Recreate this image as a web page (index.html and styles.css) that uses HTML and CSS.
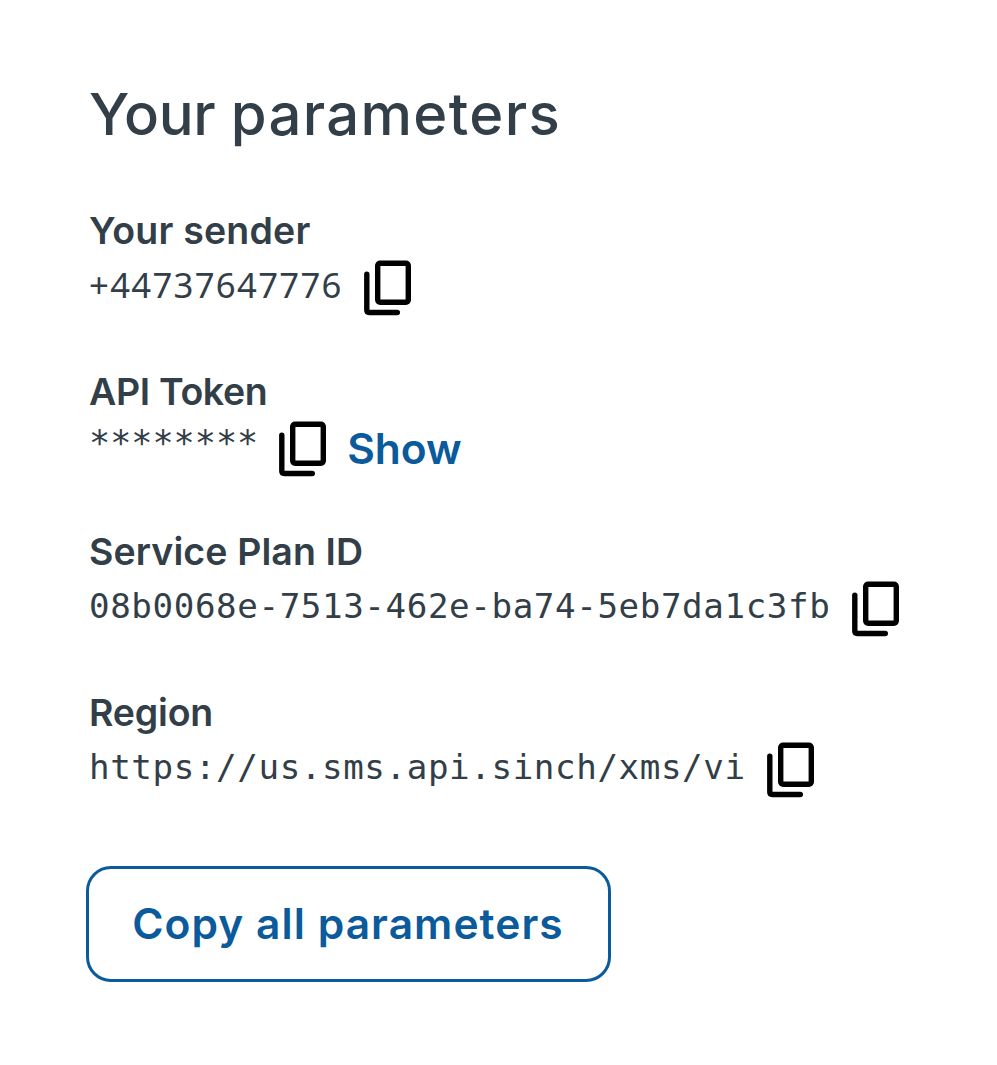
FILE: index.html
```html
<!DOCTYPE html>
<html lang="en">
<head>
<meta charset="utf-8">
<title>Your parameters</title>
<link rel="stylesheet" href="styles.css">
</head>
<body>
<svg class="sprite" aria-hidden="true">
  <symbol id="copy" viewBox="0 0 48 56">
    <rect x="13.7" y="3.2" width="30.6" height="39" rx="2.4" fill="none" stroke="currentColor" stroke-width="5.4"/>
    <path d="M2.8 14.2v35.8q0 2.5 2.5 2.5h28" fill="none" stroke="currentColor" stroke-width="5.4" stroke-linecap="round"/>
  </symbol>
</svg>
<main class="panel">
  <h1 class="title"><span class="title-lead">Your </span>parameters</h1>
  <section class="param">
    <h2 class="label label-sender">Your sender</h2>
    <div class="row"><span class="value digits">+44737647776</span><svg class="icon"><use href="#copy"/></svg></div>
  </section>
  <section class="param">
    <h2 class="label label-token">API Token</h2>
    <div class="row"><span class="value masked">********</span><svg class="icon"><use href="#copy"/></svg><a class="show">Show</a></div>
  </section>
  <section class="param">
    <h2 class="label label-plan">Service Plan ID</h2>
    <div class="row"><span class="value">08b0068e-7513-462e-ba74-5eb7da1c3fb</span><svg class="icon icon-plan"><use href="#copy"/></svg></div>
  </section>
  <section class="param">
    <h2 class="label label-region">Region</h2>
    <div class="row"><span class="value">https://us.sms.api.sinch/xms/vi</span><svg class="icon"><use href="#copy"/></svg></div>
  </section>
  <button class="copy-all">Copy all parameters</button>
</main>
</body>
</html>
```
FILE: styles.css
```css
* { box-sizing: border-box; }
body {
  margin: 0;
  background: #fff;
  color: #323e48;
  font-family: "Inter", sans-serif;
}
.sprite { position: absolute; width: 0; height: 0; }
.panel { padding: 74px 0 0 89px; }
.title {
  margin: 0 0 53px;
  font-size: 58px;
  line-height: 80px;
  font-weight: 500;
  letter-spacing: 1.35px;
  white-space: nowrap;
}
.title-lead { letter-spacing: -0.3px; }
.param { height: 160.5px; }
.label {
  margin: 0;
  font-size: 37.5px;
  line-height: 48px;
  font-weight: 600;
  white-space: nowrap;
}
.label-sender { letter-spacing: 0.2px; }
.label-token { letter-spacing: -0.35px; }
.label-plan { letter-spacing: 0.1px; }
.label-region { letter-spacing: -0.2px; }
.row { display: flex; align-items: flex-start; padding-top: 5px; }
.value {
  font-family: "DejaVu Sans Mono", monospace;
  font-size: 34.2px;
  line-height: 50px;
  letter-spacing: 0.6px;
  white-space: nowrap;
}
.digits {
  font-family: "Noto Sans", sans-serif;
  font-size: 34.7px;
  line-height: 49px;
  letter-spacing: 1.3px;
}
.masked { font-size: 35.1px; letter-spacing: 0.03px; line-height: 44px; }
.icon { flex: none; width: 48px; height: 56px; margin-left: 21px; color: #000; }
.icon-plan { margin-left: 22px; }
.show {
  margin: 3px 0 0 20px;
  font-size: 42.5px;
  line-height: 50px;
  font-weight: 600;
  color: #0a5a9c;
}
.copy-all {
  display: block;
  width: 525px;
  height: 116px;
  margin: 17px 0 0 -3.5px;
  padding: 0 0 1px 0;
  border: 3px solid #0a5a9c;
  border-radius: 25px;
  background: #fff;
  color: #0a5a9c;
  font-family: inherit;
  font-size: 42.5px;
  font-weight: 600;
  letter-spacing: 1.05px;
  white-space: nowrap;
}
```
